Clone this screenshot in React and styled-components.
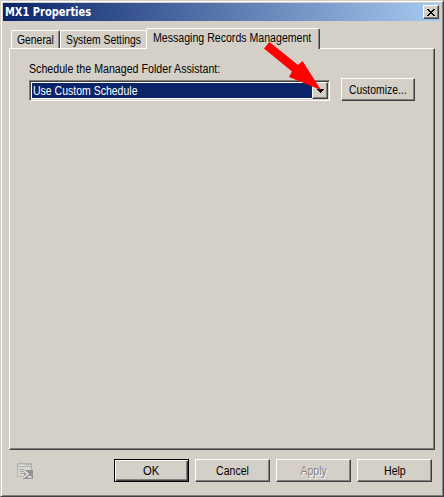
import React from "react";
import styled, { createGlobalStyle } from "styled-components";

const Global = createGlobalStyle`
  * { box-sizing: border-box; }
  body { margin: 0; background: #d4d0c8; overflow: hidden; }
`;

const Dialog = styled.div`
  width: 444px;
  height: 497px;
  display: flex;
  flex-direction: column;
  background: #d4d0c8;
  border: 1px solid;
  border-color: #d4d0c8 #404040 #404040 #d4d0c8;
  box-shadow: inset 1px 1px #fff, inset -1px -1px #808080;
  padding: 2px 3px 2px 2px;
  font: 12.5px/16px "Liberation Sans", Arial, sans-serif;
  color: #000;
`;

const TitleBar = styled.header`
  height: 18px;
  flex: none;
  display: flex;
  align-items: center;
  justify-content: space-between;
  padding: 0 1px 0 2px;
  background: linear-gradient(90deg, #0a246a, #a6caf0);
`;

const Title = styled.h1`
  margin: 0;
  font: bold 11.5px/18px "DejaVu Sans", sans-serif;
  color: #fff;
  white-space: nowrap;
  transform: scaleX(${(p) => p.$scale});
  transform-origin: left;
`;

const CloseButton = styled.button`
  width: 16px;
  height: 14px;
  padding: 0;
  display: flex;
  align-items: center;
  justify-content: center;
  background: #d4d0c8;
  border: 1px solid;
  border-color: #fff #404040 #404040 #fff;
  box-shadow: inset -1px -1px #808080;
`;

const Text = styled.span`
  display: inline-block;
  white-space: nowrap;
  transform: scaleX(${(p) => p.$scale || 0.84});
  transform-origin: ${(p) => p.$origin || "left"};
`;

const Tabs = styled.nav`
  height: 27px;
  flex: none;
  display: flex;
  align-items: flex-end;
  padding-left: 8px;
  position: relative;
`;

const Tab = styled.div`
  width: ${(p) => p.$width}px;
  height: ${(p) => (p.$active ? 21 : 18)}px;
  padding: ${(p) => (p.$active ? "1px 0 0 6px" : "1px 0 0 5px")};
  margin-bottom: ${(p) => (p.$active ? -1 : 0)}px;
  background: #d4d0c8;
  border: solid;
  border-width: 1px ${(p) => (p.$plain ? 0 : 1)}px 0 1px;
  border-color: #fff #404040 #fff #fff;
  border-radius: 2px 2px 0 0;
  box-shadow: ${(p) => (p.$plain ? "none" : "inset -1px 0 #808080")};
`;

const Panel = styled.main`
  width: 426px;
  height: 402px;
  flex: none;
  margin-left: 6px;
  padding: 12px 18px 0 19px;
  border: 1px solid;
  border-color: #fff #404040 #404040 #fff;
  box-shadow: inset -1px -1px #808080;
`;

const FieldRow = styled.div`
  display: flex;
  align-items: flex-start;
  gap: 11px;
  margin-top: 1px;
`;

const Combo = styled.div`
  width: 301px;
  height: 21px;
  margin-top: 2px;
  display: flex;
  padding: 1px;
  background: #fff;
  border: 1px solid;
  border-color: #808080 #fff #fff #808080;
  box-shadow: inset 1px 1px #404040, inset -1px -1px #d4d0c8;
`;

const Selection = styled.div`
  flex: 1;
  margin: 1px 0 1px 1px;
  padding-left: 1px;
  line-height: 17px;
  height: 15px;
  color: #fff;
  background: #0a246a;
`;

const DropButton = styled.div`
  width: 16px;
  height: 17px;
  display: flex;
  align-items: center;
  justify-content: center;
  background: #d4d0c8;
  border: 1px solid;
  border-color: #fff #404040 #404040 #fff;
  box-shadow: inset -1px -1px #808080;
`;

const Button = styled.button`
  width: ${(p) => p.$width || 75}px;
  height: 23px;
  flex: none;
  padding: 0;
  font: inherit;
  color: ${(p) => (p.disabled ? "#808080" : "#000")};
  text-shadow: ${(p) => (p.disabled ? "1px 1px #fff" : "none")};
  background: #d4d0c8;
  border: 1px solid;
  border-color: ${(p) => (p.$primary ? "#000" : "#fff #404040 #404040 #fff")};
  box-shadow: ${(p) =>
    p.$primary
      ? "inset 1px 1px #fff, inset -1px -1px #404040, inset -2px -2px #808080"
      : "inset -1px -1px #808080"};
`;

const Footer = styled.footer`
  flex: 1;
  display: flex;
  align-items: flex-start;
  gap: 6px;
  padding: 9px 8px 0 13px;
`;

const ShellIcon = styled.svg`
  width: 18px;
  height: 18px;
  margin: 3px 74px 0 0;
  flex: none;
`;

const Pointer = styled.svg`
  position: absolute;
  left: 260px;
  top: 38px;
  width: 66px;
  height: 56px;
`;

export default function App() {
  return (
    <Dialog>
      <Global />
      <TitleBar>
        <Title $scale={0.86}>MX1 Properties</Title>
        <CloseButton aria-label="Close">
          <svg width="8" height="7" shapeRendering="crispEdges">
            <path d="M0 0h2v1h1v1h2v-1h1v-1h2v1h-1v1h-1v1h-1v1h1v1h1v1h1v1h-2v-1h-1v-1h-2v1h-1v1h-2v-1h1v-1h1v-1h1v-1h-1v-1h-1v-1h-1z" />
          </svg>
        </CloseButton>
      </TitleBar>
      <Tabs>
        <Tab $width={49}><Text $scale={0.83}>General</Text></Tab>
        <Tab $width={86} $plain><Text $scale={0.83}>System Settings</Text></Tab>
        <Tab $width={174} $active><Text $scale={0.847}>Messaging Records Management</Text></Tab>
      </Tabs>
      <Panel>
        <Text $scale={0.852}>Schedule the Managed Folder Assistant:</Text>
        <FieldRow>
          <Combo>
            <Selection><Text>Use Custom Schedule</Text></Selection>
            <DropButton>
              <svg width="7" height="4" shapeRendering="crispEdges"><path d="M0 0h7v1h-1v1h-1v1h-1v1h-1v-1h-1v-1h-1v-1h-1z" /></svg>
            </DropButton>
          </Combo>
          <Button $width={74}><Text $origin="center" $scale={0.83}>Customize...</Text></Button>
        </FieldRow>
      </Panel>
      <Footer>
        <ShellIcon viewBox="0 0 18 18">
          <path d="M1.5 1.5h14v13h-14z" fill="#d9d8d4" stroke="#b0b0ad" />
          <path d="M2 2.5h13" stroke="#c8c8c5" />
          <path d="M10 2.5h1m1 0h1m1 0h1" stroke="#999" />
          <path d="M2 4.5h13" stroke="#b0b0ad" />
          <path d="M3 7.5h5M4 9.5h5M4 11.5h4" stroke="#a4a4a2" />
          <path d="M9 8h8v9H7z" fill="#929292" />
          <path d="M8.5 9l3.5 3-4.5 3.5M12 15h3.5" fill="none" stroke="#f2f2f2" strokeWidth="1.3" />
        </ShellIcon>
        <Button $primary><Text $origin="center" $scale={0.9}>OK</Text></Button>
        <Button><Text $origin="center">Cancel</Text></Button>
        <Button disabled><Text $origin="center">Apply</Text></Button>
        <Button><Text $origin="center">Help</Text></Button>
      </Footer>
      <Pointer viewBox="260 38 66 56">
        <path d="M269.5 42L298 65L302.5 61L321 90L289 77L292 71.5L264 48.5Z" fill="#f00" />
      </Pointer>
    </Dialog>
  );
}
